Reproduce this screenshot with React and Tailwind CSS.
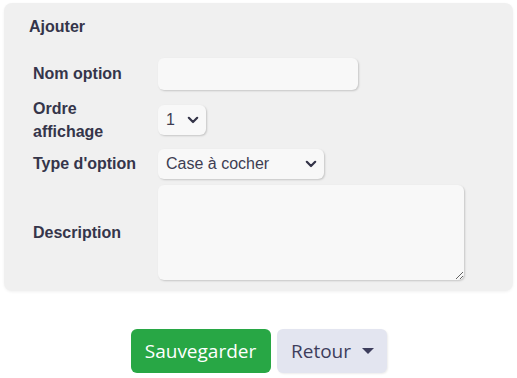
import { useState } from 'react';

function Chevron() {
  return (
    <svg width="12" height="8" viewBox="0 0 12 8" fill="none" aria-hidden="true">
      <path d="M1.8 1.8 6 6l4.2-4.2" stroke="#343448" strokeWidth="2.2" strokeLinecap="round" strokeLinejoin="round" />
    </svg>
  );
}

function FakeSelect({ value, className }) {
  return (
    <div className={`flex items-center justify-between rounded-md bg-[#f8f8f8] shadow-[1px_1px_2px_rgba(0,0,0,0.18)] pl-2 pr-[7px] text-[16px] text-[#3d3d52] ${className}`}>
      <span>{value}</span>
      <Chevron />
    </div>
  );
}

export default function App() {
  const [name, setName] = useState('');
  const [description, setDescription] = useState('');

  return (
    <div className="min-h-[378px] bg-white font-['Liberation_Sans',Arial,sans-serif] text-[#35354a]">
      <div className="pt-[3px] px-[4px]">
        <div className="rounded-lg bg-[#f0f0f0] shadow-[0_1px_3px_rgba(0,0,0,0.06)] pl-[25px] pt-[14px] pb-[12px] h-[288px]">
          <h2 className="text-[16px] font-bold leading-[20px]">Ajouter</h2>

          <div className="mt-[21px] flex flex-col gap-[6px] pl-[4px]">
            <div className="flex items-center">
              <label className="w-[125px] text-[16px] font-bold">Nom option</label>
              <input
                value={name}
                onChange={(e) => setName(e.target.value)}
                className="h-[32px] w-[200px] rounded-md bg-[#f8f8f8] shadow-[1px_1px_2px_rgba(0,0,0,0.18)] px-2 outline-none"
              />
            </div>

            <div className="flex items-center">
              <label className="w-[125px] text-[16px] font-bold leading-[23px] pt-[1px]">Ordre<br />affichage</label>
              <FakeSelect value="1" className="h-[30px] w-[48px]" />
            </div>

            <div className="flex items-center">
              <label className="w-[125px] text-[16px] font-bold">Type d'option</label>
              <FakeSelect value="Case à cocher" className="h-[30px] w-[166px]" />
            </div>

            <div className="flex items-center">
              <label className="w-[125px] text-[16px] font-bold">Description</label>
              <textarea
                value={description}
                onChange={(e) => setDescription(e.target.value)}
                className="h-[95px] w-[306px] rounded-md bg-[#f8f8f8] shadow-[1px_1px_2px_rgba(0,0,0,0.18)] p-2 outline-none"
              />
            </div>
          </div>
        </div>
      </div>

      <div className="mt-[38px] flex justify-center gap-[6px] font-['Open_Sans','Noto_Sans',sans-serif]">
        <button type="button" className="h-[44px] w-[140px] rounded-md bg-[#28a745] text-[19px] text-white">
          Sauvegarder
        </button>
        <button type="button" className="flex h-[44px] w-[110px] items-center justify-center gap-[11px] rounded-md bg-[#e3e5f0] pl-[2px] text-[19px] text-[#3d3d5c] shadow-[1px_1px_2px_rgba(0,0,0,0.08)]">
          Retour
          <span className="h-0 w-0 border-x-[6px] border-t-[6px] border-x-transparent border-t-[#3d3d5c]" />
        </button>
      </div>
    </div>
  );
}
